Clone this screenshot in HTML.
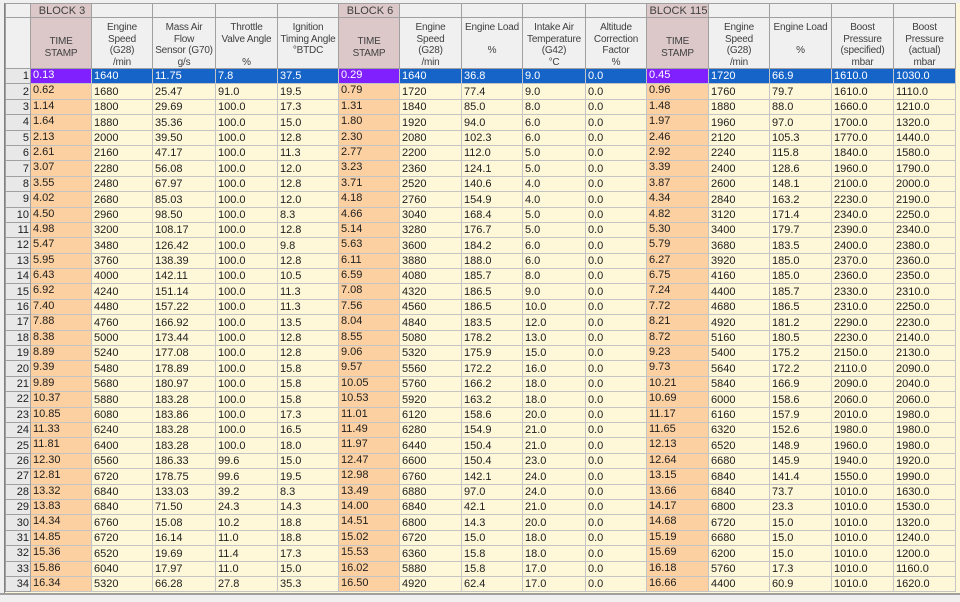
<!DOCTYPE html>
<html><head><style>
html,body{margin:0;padding:0;width:960px;height:602px;overflow:hidden;background:#f0f0f0;}
#wrap{position:absolute;left:4px;top:3px;width:956px;height:590px;background:#fff8d8;border-left:1px solid #808080;}
table{position:absolute;left:0;top:0;border-collapse:collapse;table-layout:fixed;font-family:"Liberation Sans",Arial,sans-serif;font-size:11px;color:#202020;}
td{border:1px solid #c4c4c4;padding:0 0 0 2px;overflow:hidden;white-space:nowrap;height:14.4px;line-height:14px;vertical-align:bottom;background:#fff8d8;}
tr.h1 td{height:13px;background:#f0f0f0;border-color:#a0a0a0;text-align:center;vertical-align:middle;line-height:12px;color:#404040;}
tr.h1 td.b{background:#dcc8c8;}
tr.h2 td{height:50px;background:#f0f0f0;border-color:#a0a0a0;text-align:center;white-space:nowrap;vertical-align:top;color:#404040;padding:0;font-size:10px;letter-spacing:-0.2px;}
tr.h2 td div{height:50px;overflow:hidden;line-height:11.5px;padding-top:4px;box-sizing:border-box;}
tr.h2 td.t{background:#dcc8c8;}
tr.h2 td.t div{padding-top:18px;}
td.n{background:#e8e8e8;border-color:#a0a0a0;text-align:right;padding:0 1px 0 0;vertical-align:middle;}
td.s{background:#fcd0a0;vertical-align:top;line-height:12px;}
tr.sel td{background:#1664c8;color:#fff;}
tr.sel td.s{background:#8020ff;}
tr.sel td.n{background:#e8e8e8;color:#202020;}
</style></head><body>
<div id="wrap">
<table>
<colgroup><col style="width:25px"><col style="width:61px"><col style="width:61px"><col style="width:63px"><col style="width:62px"><col style="width:61px"><col style="width:61px"><col style="width:62px"><col style="width:61px"><col style="width:63px"><col style="width:61px"><col style="width:62px"><col style="width:61px"><col style="width:62px"><col style="width:62px"><col style="width:62px"></colgroup>
<tr class="h1"><td></td><td class="b">BLOCK 3</td><td></td><td></td><td></td><td></td><td class="b">BLOCK 6</td><td></td><td></td><td></td><td></td><td class="b">BLOCK 115</td><td></td><td></td><td></td><td></td></tr>
<tr class="h2"><td><div></div></td><td class="t"><div>TIME<br>STAMP</div></td><td><div>Engine<br>Speed<br>(G28)<br>/min</div></td><td><div>Mass Air<br>Flow<br>Sensor (G70)<br>g/s</div></td><td><div>Throttle<br>Valve Angle<br><br>%</div></td><td><div>Ignition<br>Timing Angle<br>°BTDC</div></td><td class="t"><div>TIME<br>STAMP</div></td><td><div>Engine<br>Speed<br>(G28)<br>/min</div></td><td><div>Engine Load<br><br>%</div></td><td><div>Intake Air<br>Temperature<br>(G42)<br>°C</div></td><td><div>Altitude<br>Correction<br>Factor<br>%</div></td><td class="t"><div>TIME<br>STAMP</div></td><td><div>Engine<br>Speed<br>(G28)<br>/min</div></td><td><div>Engine Load<br><br>%</div></td><td><div>Boost<br>Pressure<br>(specified)<br>mbar</div></td><td><div>Boost<br>Pressure<br>(actual)<br>mbar</div></td></tr>
<tr class="sel"><td class="n">1</td><td class="s">0.13</td><td>1640</td><td>11.75</td><td>7.8</td><td>37.5</td><td class="s">0.29</td><td>1640</td><td>36.8</td><td>9.0</td><td>0.0</td><td class="s">0.45</td><td>1720</td><td>66.9</td><td>1610.0</td><td>1030.0</td></tr>
<tr><td class="n">2</td><td class="s">0.62</td><td>1680</td><td>25.47</td><td>91.0</td><td>19.5</td><td class="s">0.79</td><td>1720</td><td>77.4</td><td>9.0</td><td>0.0</td><td class="s">0.96</td><td>1760</td><td>79.7</td><td>1610.0</td><td>1110.0</td></tr>
<tr><td class="n">3</td><td class="s">1.14</td><td>1800</td><td>29.69</td><td>100.0</td><td>17.3</td><td class="s">1.31</td><td>1840</td><td>85.0</td><td>8.0</td><td>0.0</td><td class="s">1.48</td><td>1880</td><td>88.0</td><td>1660.0</td><td>1210.0</td></tr>
<tr><td class="n">4</td><td class="s">1.64</td><td>1880</td><td>35.36</td><td>100.0</td><td>15.0</td><td class="s">1.80</td><td>1920</td><td>94.0</td><td>6.0</td><td>0.0</td><td class="s">1.97</td><td>1960</td><td>97.0</td><td>1700.0</td><td>1320.0</td></tr>
<tr><td class="n">5</td><td class="s">2.13</td><td>2000</td><td>39.50</td><td>100.0</td><td>12.8</td><td class="s">2.30</td><td>2080</td><td>102.3</td><td>6.0</td><td>0.0</td><td class="s">2.46</td><td>2120</td><td>105.3</td><td>1770.0</td><td>1440.0</td></tr>
<tr><td class="n">6</td><td class="s">2.61</td><td>2160</td><td>47.17</td><td>100.0</td><td>11.3</td><td class="s">2.77</td><td>2200</td><td>112.0</td><td>5.0</td><td>0.0</td><td class="s">2.92</td><td>2240</td><td>115.8</td><td>1840.0</td><td>1580.0</td></tr>
<tr><td class="n">7</td><td class="s">3.07</td><td>2280</td><td>56.08</td><td>100.0</td><td>12.0</td><td class="s">3.23</td><td>2360</td><td>124.1</td><td>5.0</td><td>0.0</td><td class="s">3.39</td><td>2400</td><td>128.6</td><td>1960.0</td><td>1790.0</td></tr>
<tr><td class="n">8</td><td class="s">3.55</td><td>2480</td><td>67.97</td><td>100.0</td><td>12.8</td><td class="s">3.71</td><td>2520</td><td>140.6</td><td>4.0</td><td>0.0</td><td class="s">3.87</td><td>2600</td><td>148.1</td><td>2100.0</td><td>2000.0</td></tr>
<tr><td class="n">9</td><td class="s">4.02</td><td>2680</td><td>85.03</td><td>100.0</td><td>12.0</td><td class="s">4.18</td><td>2760</td><td>154.9</td><td>4.0</td><td>0.0</td><td class="s">4.34</td><td>2840</td><td>163.2</td><td>2230.0</td><td>2190.0</td></tr>
<tr><td class="n">10</td><td class="s">4.50</td><td>2960</td><td>98.50</td><td>100.0</td><td>8.3</td><td class="s">4.66</td><td>3040</td><td>168.4</td><td>5.0</td><td>0.0</td><td class="s">4.82</td><td>3120</td><td>171.4</td><td>2340.0</td><td>2250.0</td></tr>
<tr><td class="n">11</td><td class="s">4.98</td><td>3200</td><td>108.17</td><td>100.0</td><td>12.8</td><td class="s">5.14</td><td>3280</td><td>176.7</td><td>5.0</td><td>0.0</td><td class="s">5.30</td><td>3400</td><td>179.7</td><td>2390.0</td><td>2340.0</td></tr>
<tr><td class="n">12</td><td class="s">5.47</td><td>3480</td><td>126.42</td><td>100.0</td><td>9.8</td><td class="s">5.63</td><td>3600</td><td>184.2</td><td>6.0</td><td>0.0</td><td class="s">5.79</td><td>3680</td><td>183.5</td><td>2400.0</td><td>2380.0</td></tr>
<tr><td class="n">13</td><td class="s">5.95</td><td>3760</td><td>138.39</td><td>100.0</td><td>12.8</td><td class="s">6.11</td><td>3880</td><td>188.0</td><td>6.0</td><td>0.0</td><td class="s">6.27</td><td>3920</td><td>185.0</td><td>2370.0</td><td>2360.0</td></tr>
<tr><td class="n">14</td><td class="s">6.43</td><td>4000</td><td>142.11</td><td>100.0</td><td>10.5</td><td class="s">6.59</td><td>4080</td><td>185.7</td><td>8.0</td><td>0.0</td><td class="s">6.75</td><td>4160</td><td>185.0</td><td>2360.0</td><td>2350.0</td></tr>
<tr><td class="n">15</td><td class="s">6.92</td><td>4240</td><td>151.14</td><td>100.0</td><td>11.3</td><td class="s">7.08</td><td>4320</td><td>186.5</td><td>9.0</td><td>0.0</td><td class="s">7.24</td><td>4400</td><td>185.7</td><td>2330.0</td><td>2310.0</td></tr>
<tr><td class="n">16</td><td class="s">7.40</td><td>4480</td><td>157.22</td><td>100.0</td><td>11.3</td><td class="s">7.56</td><td>4560</td><td>186.5</td><td>10.0</td><td>0.0</td><td class="s">7.72</td><td>4680</td><td>186.5</td><td>2310.0</td><td>2250.0</td></tr>
<tr><td class="n">17</td><td class="s">7.88</td><td>4760</td><td>166.92</td><td>100.0</td><td>13.5</td><td class="s">8.04</td><td>4840</td><td>183.5</td><td>12.0</td><td>0.0</td><td class="s">8.21</td><td>4920</td><td>181.2</td><td>2290.0</td><td>2230.0</td></tr>
<tr><td class="n">18</td><td class="s">8.38</td><td>5000</td><td>173.44</td><td>100.0</td><td>12.8</td><td class="s">8.55</td><td>5080</td><td>178.2</td><td>13.0</td><td>0.0</td><td class="s">8.72</td><td>5160</td><td>180.5</td><td>2230.0</td><td>2140.0</td></tr>
<tr><td class="n">19</td><td class="s">8.89</td><td>5240</td><td>177.08</td><td>100.0</td><td>12.8</td><td class="s">9.06</td><td>5320</td><td>175.9</td><td>15.0</td><td>0.0</td><td class="s">9.23</td><td>5400</td><td>175.2</td><td>2150.0</td><td>2130.0</td></tr>
<tr><td class="n">20</td><td class="s">9.39</td><td>5480</td><td>178.89</td><td>100.0</td><td>15.8</td><td class="s">9.57</td><td>5560</td><td>172.2</td><td>16.0</td><td>0.0</td><td class="s">9.73</td><td>5640</td><td>172.2</td><td>2110.0</td><td>2090.0</td></tr>
<tr><td class="n">21</td><td class="s">9.89</td><td>5680</td><td>180.97</td><td>100.0</td><td>15.8</td><td class="s">10.05</td><td>5760</td><td>166.2</td><td>18.0</td><td>0.0</td><td class="s">10.21</td><td>5840</td><td>166.9</td><td>2090.0</td><td>2040.0</td></tr>
<tr><td class="n">22</td><td class="s">10.37</td><td>5880</td><td>183.28</td><td>100.0</td><td>15.8</td><td class="s">10.53</td><td>5920</td><td>163.2</td><td>18.0</td><td>0.0</td><td class="s">10.69</td><td>6000</td><td>158.6</td><td>2060.0</td><td>2060.0</td></tr>
<tr><td class="n">23</td><td class="s">10.85</td><td>6080</td><td>183.86</td><td>100.0</td><td>17.3</td><td class="s">11.01</td><td>6120</td><td>158.6</td><td>20.0</td><td>0.0</td><td class="s">11.17</td><td>6160</td><td>157.9</td><td>2010.0</td><td>1980.0</td></tr>
<tr><td class="n">24</td><td class="s">11.33</td><td>6240</td><td>183.28</td><td>100.0</td><td>16.5</td><td class="s">11.49</td><td>6280</td><td>154.9</td><td>21.0</td><td>0.0</td><td class="s">11.65</td><td>6320</td><td>152.6</td><td>1980.0</td><td>1980.0</td></tr>
<tr><td class="n">25</td><td class="s">11.81</td><td>6400</td><td>183.28</td><td>100.0</td><td>18.0</td><td class="s">11.97</td><td>6440</td><td>150.4</td><td>21.0</td><td>0.0</td><td class="s">12.13</td><td>6520</td><td>148.9</td><td>1960.0</td><td>1980.0</td></tr>
<tr><td class="n">26</td><td class="s">12.30</td><td>6560</td><td>186.33</td><td>99.6</td><td>15.0</td><td class="s">12.47</td><td>6600</td><td>150.4</td><td>23.0</td><td>0.0</td><td class="s">12.64</td><td>6680</td><td>145.9</td><td>1940.0</td><td>1920.0</td></tr>
<tr><td class="n">27</td><td class="s">12.81</td><td>6720</td><td>178.75</td><td>99.6</td><td>19.5</td><td class="s">12.98</td><td>6760</td><td>142.1</td><td>24.0</td><td>0.0</td><td class="s">13.15</td><td>6840</td><td>141.4</td><td>1550.0</td><td>1990.0</td></tr>
<tr><td class="n">28</td><td class="s">13.32</td><td>6840</td><td>133.03</td><td>39.2</td><td>8.3</td><td class="s">13.49</td><td>6880</td><td>97.0</td><td>24.0</td><td>0.0</td><td class="s">13.66</td><td>6840</td><td>73.7</td><td>1010.0</td><td>1630.0</td></tr>
<tr><td class="n">29</td><td class="s">13.83</td><td>6840</td><td>71.50</td><td>24.3</td><td>14.3</td><td class="s">14.00</td><td>6840</td><td>42.1</td><td>21.0</td><td>0.0</td><td class="s">14.17</td><td>6800</td><td>23.3</td><td>1010.0</td><td>1530.0</td></tr>
<tr><td class="n">30</td><td class="s">14.34</td><td>6760</td><td>15.08</td><td>10.2</td><td>18.8</td><td class="s">14.51</td><td>6800</td><td>14.3</td><td>20.0</td><td>0.0</td><td class="s">14.68</td><td>6720</td><td>15.0</td><td>1010.0</td><td>1320.0</td></tr>
<tr><td class="n">31</td><td class="s">14.85</td><td>6720</td><td>16.14</td><td>11.0</td><td>18.8</td><td class="s">15.02</td><td>6720</td><td>15.0</td><td>18.0</td><td>0.0</td><td class="s">15.19</td><td>6680</td><td>15.0</td><td>1010.0</td><td>1240.0</td></tr>
<tr><td class="n">32</td><td class="s">15.36</td><td>6520</td><td>19.69</td><td>11.4</td><td>17.3</td><td class="s">15.53</td><td>6360</td><td>15.8</td><td>18.0</td><td>0.0</td><td class="s">15.69</td><td>6200</td><td>15.0</td><td>1010.0</td><td>1200.0</td></tr>
<tr><td class="n">33</td><td class="s">15.86</td><td>6040</td><td>17.97</td><td>11.0</td><td>15.0</td><td class="s">16.02</td><td>5880</td><td>15.8</td><td>17.0</td><td>0.0</td><td class="s">16.18</td><td>5760</td><td>17.3</td><td>1010.0</td><td>1160.0</td></tr>
<tr><td class="n">34</td><td class="s">16.34</td><td>5320</td><td>66.28</td><td>27.8</td><td>35.3</td><td class="s">16.50</td><td>4920</td><td>62.4</td><td>17.0</td><td>0.0</td><td class="s">16.66</td><td>4400</td><td>60.9</td><td>1010.0</td><td>1620.0</td></tr>
</table>
</div>
<div style="position:absolute;left:0;top:593px;width:960px;height:2px;background:#a0a0a0"></div>
</body></html>
